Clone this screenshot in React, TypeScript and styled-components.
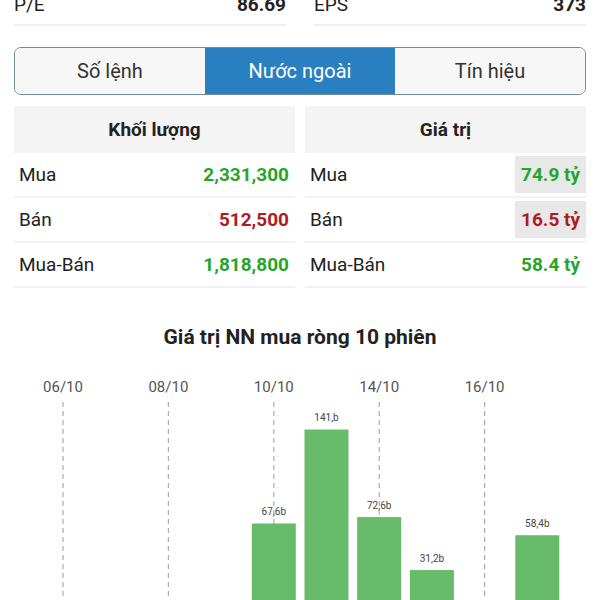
import styled, { createGlobalStyle } from 'styled-components';

const GlobalStyle = createGlobalStyle`
  body {
    margin: 0;
    background: #fff;
    font-family: Roboto, "Noto Sans", sans-serif;
    overflow: hidden;
  }
`;

const Page = styled.div`
  width: 600px;
  height: 600px;
  overflow: hidden;
  display: flex;
  flex-direction: column;
`;

const StatsRow = styled.div`
  display: grid;
  grid-template-columns: 1fr 1fr;
  column-gap: 28px;
  margin: -6px 14px 0;
`;

const StatCell = styled.div`
  display: flex;
  justify-content: space-between;
  font-size: 19px;
  line-height: 22px;
  color: #222;
  padding-bottom: 8px;
  border-bottom: 2px solid #f0f0f0;
`;

const StatValue = styled.span`
  font-weight: 700;
`;

const Tabs = styled.div`
  display: grid;
  grid-template-columns: 1fr 1fr 1fr;
  margin: 21px 14px 0;
  height: 48px;
  border: 1px solid #6f8d9c;
  border-radius: 7px;
  overflow: hidden;
  box-sizing: border-box;
  flex-shrink: 0;
`;

const Tab = styled.div<{ $active?: boolean }>`
  display: flex;
  align-items: center;
  justify-content: center;
  font-size: 20px;
  background: ${(p) => (p.$active ? '#2a7fc0' : '#f7f7f7')};
  color: ${(p) => (p.$active ? '#fff' : '#333')};
`;

const Tables = styled.div`
  display: grid;
  grid-template-columns: 1fr 1fr;
  column-gap: 10px;
  margin: 11px 14px 0;
  flex-shrink: 0;
`;

const Table = styled.div`
  display: flex;
  flex-direction: column;
`;

const HeadCell = styled.div`
  height: 47px;
  display: flex;
  align-items: center;
  justify-content: center;
  background: #f4f4f4;
  font-weight: 700;
  font-size: 19px;
  color: #222;
`;

const Row = styled.div`
  height: 45px;
  box-sizing: border-box;
  display: flex;
  align-items: center;
  justify-content: space-between;
  border-bottom: 2px solid #f2f2f2;
  font-size: 19px;
`;

const Label = styled.span`
  padding-left: 5px;
  color: #222;
`;

const Value = styled.span<{ $tone: 'up' | 'down'; $flash?: boolean }>`
  height: 37px;
  display: flex;
  align-items: center;
  padding: 0 6px;
  font-weight: 700;
  color: ${(p) => (p.$tone === 'up' ? '#27a52a' : '#b01a1f')};
  background: ${(p) => (p.$flash ? '#e8e8e8' : 'transparent')};
`;

const ChartTitle = styled.div`
  margin-top: 36px;
  text-align: center;
  font-weight: 700;
  font-size: 21px;
  line-height: 26px;
  color: #222;
  flex-shrink: 0;
`;

const ChartSvg = styled.svg`
  display: block;
  margin-top: 12px;
  flex-shrink: 0;
`;

const volumes = [
  { label: 'Mua', value: '2,331,300', tone: 'up' as const },
  { label: 'Bán', value: '512,500', tone: 'down' as const },
  { label: 'Mua-Bán', value: '1,818,800', tone: 'up' as const },
];

const values = [
  { label: 'Mua', value: '74.9 tỷ', tone: 'up' as const, flash: true },
  { label: 'Bán', value: '16.5 tỷ', tone: 'down' as const, flash: true },
  { label: 'Mua-Bán', value: '58.4 tỷ', tone: 'up' as const },
];

// 10 phiên, null = không có cột dương
const sessions: { date?: string; value: number | null; text?: string }[] = [
  { date: '06/10', value: null },
  { value: null },
  { date: '08/10', value: null },
  { value: null },
  { date: '10/10', value: 67.6, text: '67,6b' },
  { value: 141, text: '141,b' },
  { date: '14/10', value: 72.6, text: '72,6b' },
  { value: 31.2, text: '31,2b' },
  { date: '16/10', value: null },
  { value: 58.4, text: '58,4b' },
];

const SLOT = 52.7;
const FIRST = 63;
const BASE = 248;
const SCALE = 1.28;
const BAR_W = 44;

const NetChart = () => (
  <ChartSvg width={600} height={250} viewBox="0 0 600 250">
    {sessions.map((s, i) =>
      s.date ? (
        <g key={`d${i}`}>
          <text
            x={FIRST + i * SLOT}
            y={26}
            textAnchor="middle"
            dominantBaseline="middle"
            fontSize={15}
            fill="#555"
            fontFamily="Roboto, sans-serif"
          >
            {s.date}
          </text>
          <line
            x1={FIRST + i * SLOT}
            x2={FIRST + i * SLOT}
            y1={40}
            y2={250}
            stroke="#acacac"
            strokeWidth={1.2}
            strokeDasharray="5 4"
          />
        </g>
      ) : null
    )}
    {sessions.map((s, i) => {
      if (s.value === null) return null;
      const cx = FIRST + i * SLOT;
      const top = BASE - s.value * SCALE;
      return (
        <g key={`b${i}`}>
          <rect x={cx - BAR_W / 2} y={top} width={BAR_W} height={BASE - top + 10} fill="#68bb68" />
          <text
            x={cx}
            y={top - 11}
            textAnchor="middle"
            dominantBaseline="middle"
            fontSize={10}
            fill="#444"
            fontFamily="Roboto, sans-serif"
          >
            {s.text}
          </text>
        </g>
      );
    })}
  </ChartSvg>
);

const App = () => {
  return (
    <Page>
      <GlobalStyle />
      <StatsRow>
        <StatCell>
          <span>P/E</span>
          <StatValue>86.69</StatValue>
        </StatCell>
        <StatCell>
          <span>EPS</span>
          <StatValue>373</StatValue>
        </StatCell>
      </StatsRow>
      <Tabs>
        <Tab>Số lệnh</Tab>
        <Tab $active>Nước ngoài</Tab>
        <Tab>Tín hiệu</Tab>
      </Tabs>
      <Tables>
        <Table>
          <HeadCell>Khối lượng</HeadCell>
          {volumes.map((r) => (
            <Row key={r.label}>
              <Label>{r.label}</Label>
              <Value $tone={r.tone}>{r.value}</Value>
            </Row>
          ))}
        </Table>
        <Table>
          <HeadCell>Giá trị</HeadCell>
          {values.map((r) => (
            <Row key={r.label}>
              <Label>{r.label}</Label>
              <Value $tone={r.tone} $flash={r.flash}>
                {r.value}
              </Value>
            </Row>
          ))}
        </Table>
      </Tables>
      <ChartTitle>Giá trị NN mua ròng 10 phiên</ChartTitle>
      <NetChart />
    </Page>
  );
};

export default App;
